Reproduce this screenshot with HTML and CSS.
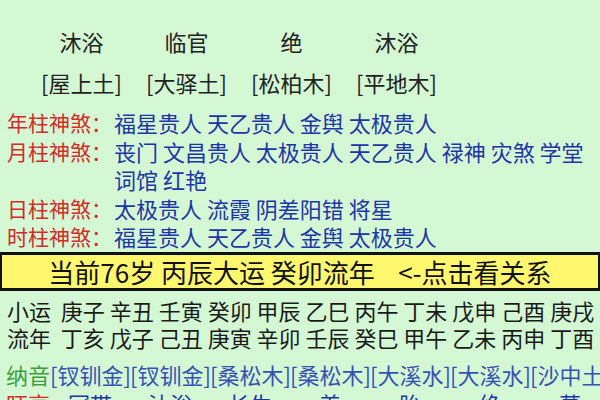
FILE: index.html
```html
<!DOCTYPE html>
<html lang="zh-CN">

<head>
    <meta charset="UTF-8">
    <meta name="viewport" content="width=device-width, initial-scale=1.0">
    <title>排盘</title>
    <link rel="stylesheet" href="styles.css">
</head>

<body>
    <div class="page">
        <div class="pillars">
            <div class="p">沐浴</div>
            <div class="p">临官</div>
            <div class="p">绝</div>
            <div class="p">沐浴</div>
        </div>
        <div class="pillars nayin-top">
            <div class="p">[屋上土]</div>
            <div class="p">[大驿土]</div>
            <div class="p">[松柏木]</div>
            <div class="p">[平地木]</div>
        </div>

        <div class="shensha">
            <div class="lbl">年柱神煞：</div>
            <div class="val">福星贵人 天乙贵人 金舆 太极贵人</div>
            <div class="lbl">月柱神煞：</div>
            <div class="val">丧门 文昌贵人 太极贵人 天乙贵人 禄神 灾煞 学堂<br>词馆 红艳</div>
            <div class="lbl">日柱神煞：</div>
            <div class="val">太极贵人 流霞 阴差阳错 将星</div>
            <div class="lbl">时柱神煞：</div>
            <div class="val">福星贵人 天乙贵人 金舆 太极贵人</div>
        </div>

        <div class="banner">当前76岁 丙辰大运 癸卯流年&nbsp;&nbsp;&nbsp;&nbsp;&lt;-点击看关系</div>

        <div class="years">
            <div class="line">小运&nbsp;&nbsp;庚子 辛丑 壬寅 癸卯 甲辰 乙巳 丙午 丁未 戊申 己酉 庚戌</div>
            <div class="line">流年&nbsp;&nbsp;丁亥 戊子 己丑 庚寅 辛卯 壬辰 癸巳 甲午 乙未 丙申 丁酉</div>
        </div>

        <div class="grid nayin">
            <div class="g-lbl green">纳音</div>
            <div class="cell">[钗钏金]</div>
            <div class="cell">[钗钏金]</div>
            <div class="cell">[桑松木]</div>
            <div class="cell">[桑松木]</div>
            <div class="cell">[大溪水]</div>
            <div class="cell">[大溪水]</div>
            <div class="cell">[沙中土]</div>
        </div>
        <div class="grid wangshuai">
            <div class="g-lbl red">旺衰</div>
            <div class="cell">冠带</div>
            <div class="cell">沐浴</div>
            <div class="cell">长生</div>
            <div class="cell">养</div>
            <div class="cell">胎</div>
            <div class="cell">绝</div>
            <div class="cell">墓</div>
        </div>
    </div>
</body>

</html>
```

FILE: styles.css
```css
body {
    margin: 0;
    background-color: #d4f8d4;
    font-family: "Noto Sans CJK SC", "Noto Sans", sans-serif;
    color: #222222;
    overflow: hidden;
}

.page {
    width: 600px;
    height: 400px;
    overflow: hidden;
}

.pillars {
    display: grid;
    grid-template-columns: repeat(4, 105px);
    padding-left: 29px;
    padding-top: 26px;
    font-size: 22px;
    line-height: 30px;
}

.nayin-top {
    padding-top: 11px;
}

.p {
    text-align: center;
    white-space: nowrap;
}

.shensha {
    display: grid;
    grid-template-columns: 107px 1fr;
    padding-top: 11px;
    padding-left: 7px;
    line-height: 28.5px;
}

.lbl {
    color: #d62a2a;
    font-size: 21px;
}

.val {
    color: #1e35a8;
    font-size: 22px;
    white-space: nowrap;
}

.banner {
    margin-top: 1px;
    background-color: #fff86e;
    border: 3px solid #111111;
    border-left-width: 2px;
    border-right-width: 2px;
    height: 33px;
    line-height: 33px;
    text-align: center;
    font-size: 26px;
    color: #111111;
    white-space: nowrap;
}

.years {
    padding-top: 6px;
    padding-left: 7px;
    font-size: 22px;
    line-height: 27px;
    color: #1a1a1a;
}

.line {
    white-space: nowrap;
}

.grid {
    display: grid;
    grid-template-columns: 44px repeat(7, 80px);
    padding-left: 6px;
    font-size: 22px;
    line-height: 27px;
    white-space: nowrap;
}

.nayin {
    padding-top: 10px;
    color: #3352b4;
}

.wangshuai {
    padding-top: 2px;
    color: #1e35a8;
}

.cell {
    text-align: center;
}

.green {
    color: #3da03d;
}

.red {
    color: #d62a2a;
}
```
